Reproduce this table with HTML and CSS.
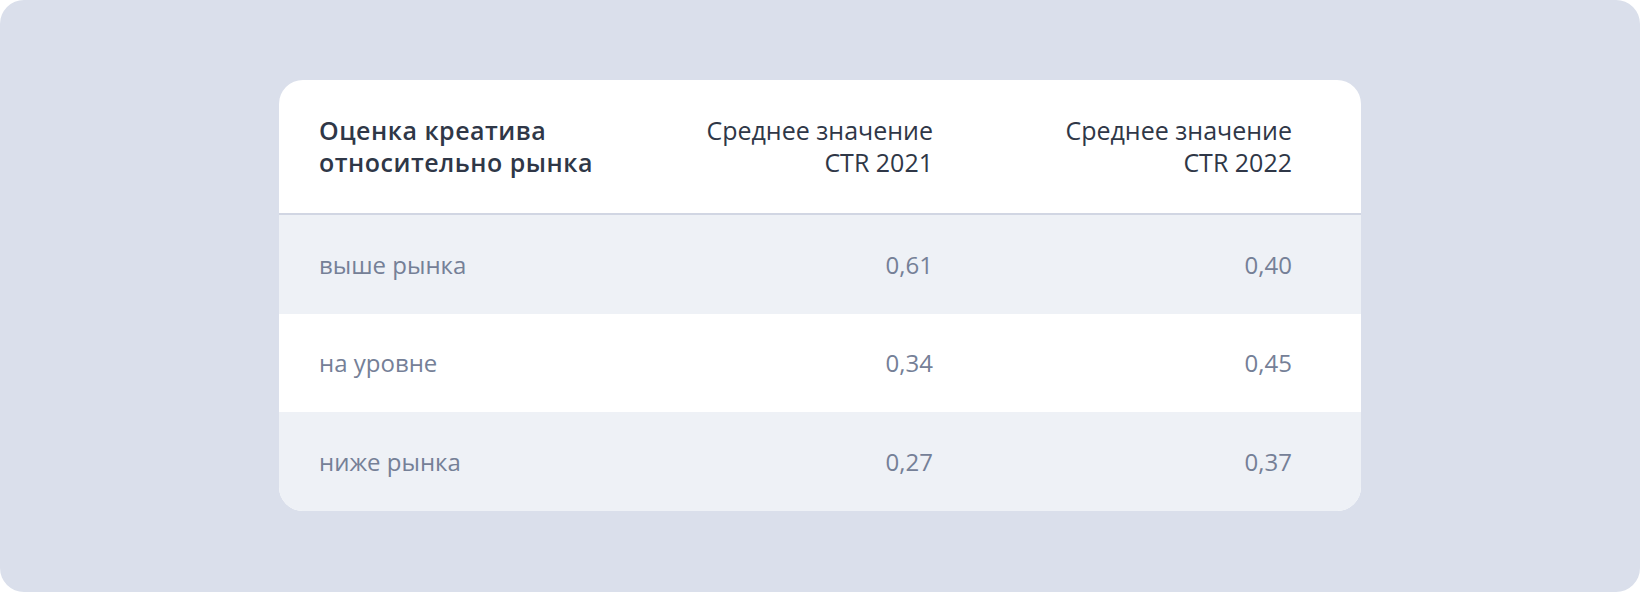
FILE: index.html
```html
<!DOCTYPE html>
<html lang="ru">
<head>
<meta charset="utf-8">
<title>CTR</title>
<link rel="stylesheet" href="styles.css">
</head>
<body>
<div class="stage">
  <div class="card">
    <div class="row head">
      <div class="cell first">Оценка креатива<br>относительно рынка</div>
      <div class="cell num">Среднее значение<br>CTR 2021</div>
      <div class="cell num">Среднее значение<br>CTR 2022</div>
    </div>
    <div class="row alt">
      <div class="cell">выше рынка</div>
      <div class="cell num">0,61</div>
      <div class="cell num">0,40</div>
    </div>
    <div class="row mid">
      <div class="cell">на уровне</div>
      <div class="cell num">0,34</div>
      <div class="cell num">0,45</div>
    </div>
    <div class="row alt last">
      <div class="cell">ниже рынка</div>
      <div class="cell num">0,27</div>
      <div class="cell num">0,37</div>
    </div>
  </div>
</div>
</body>
</html>
```
FILE: styles.css
```css
* { box-sizing: border-box; }
html, body { margin: 0; padding: 0; background: #ffffff; }
body { font-family: "Open Sans", "Noto Sans", sans-serif; }
.stage {
  width: 1640px;
  height: 592px;
  background: #dadfeb;
  border-radius: 24px;
  display: flex;
  justify-content: center;
  align-items: flex-start;
  padding-top: 80px;
}
.card {
  width: 1082px;
  background: #ffffff;
  border-radius: 24px;
  overflow: hidden;
}
.row {
  display: grid;
  grid-template-columns: 1fr 300px 359px;
  align-items: center;
  padding: 0 69px 0 40px;
  height: 99px;
  font-size: 24px;
  line-height: 32px;
  color: #758097;
}
.row.head {
  height: 135px;
  padding-bottom: 2px;
  border-bottom: 2px solid #d1d6e3;
  color: #2f3747;
  font-size: 25px;
}
.row.head .first { font-weight: 600; letter-spacing: 0.5px; }
.row.alt { background: #eef1f6; }
.row.mid { background: #ffffff; height: 98px; }
.num { text-align: right; }
```
